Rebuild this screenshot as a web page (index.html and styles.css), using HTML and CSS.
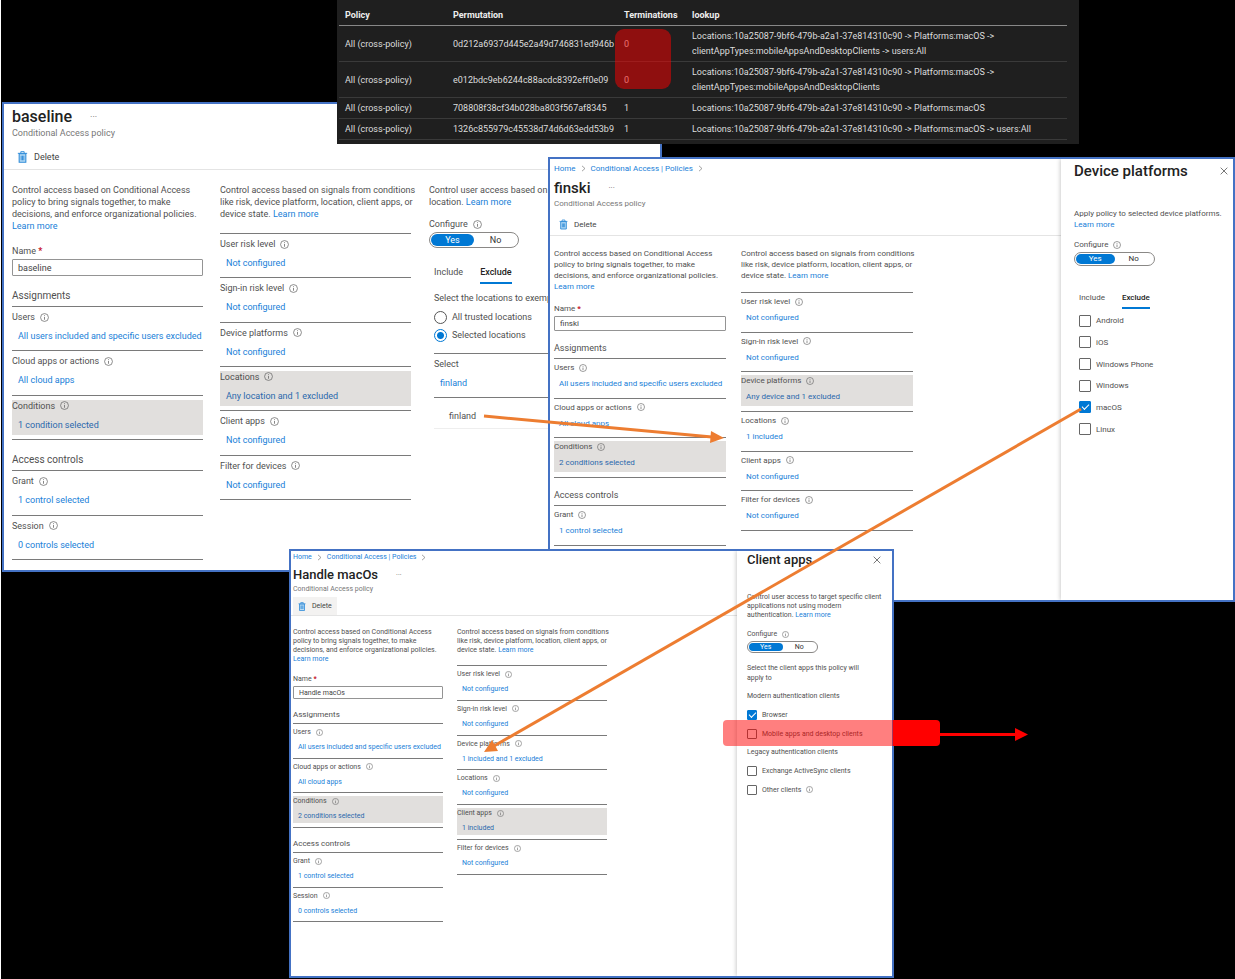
FILE: index.html
```html
<!DOCTYPE html>
<html lang="en">
<head>
<meta charset="utf-8">
<title>Conditional Access policies</title>
<link rel="stylesheet" href="styles.css">
</head>
<body>
<svg class="defs" aria-hidden="true">
  <symbol id="info" viewBox="0 0 16 16"><circle cx="8" cy="8" r="7" fill="none" stroke="currentColor" stroke-width="1.3"/><path d="M8 7v5M8 4v1.500" stroke="currentColor" stroke-width="1.4"/></symbol>
  <symbol id="trash" viewBox="0 0 16 18"><path d="M3 4h10v13H3z" fill="#b9dcf5" stroke="#2e8bd8" stroke-width="1.6"/><path d="M1 3.500h14M5.500 3V1h5v2M6 7v7M8 7v7M10 7v7" fill="none" stroke="#2e8bd8" stroke-width="1.4"/></symbol>
  <symbol id="close" viewBox="0 0 12 12"><path d="M1 1l10 10M11 1L1 11" fill="none" stroke="currentColor" stroke-width="1.1"/></symbol>
  <symbol id="chev" viewBox="0 0 8 12"><path d="M1.500 1.500L6.500 6l-5 4.500" fill="none" stroke="currentColor" stroke-width="1.2"/></symbol>
</svg>
<main class="canvas">

  <section class="window win-baseline">
    <header class="head">
      <div class="title-row"><h1>baseline</h1><button class="more" aria-label="More">···</button></div>
      <p class="sub">Conditional Access policy</p>
    </header>
    <div class="toolbar"><button class="delete"><svg><use href="#trash"/></svg>Delete</button></div>
    <div class="columns">
      <div class="col">
        <p class="desc">Control access based on Conditional Access<br>policy to bring signals together, to make<br>decisions, and enforce organizational policies.<br><a href="#">Learn more</a></p>
        <label class="name" for="n1">Name <b>*</b></label>
        <input class="field" id="n1" type="text" value="baseline">
        <h2>Assignments</h2>
        <ul class="list rows3">
          <li><div><span>Users <svg><use href="#info"/></svg></span><a href="#">All users included and specific users excluded</a></div></li>
          <li><div><span>Cloud apps or actions <svg><use href="#info"/></svg></span><a href="#">All cloud apps</a></div></li>
          <li class="on"><div><span>Conditions <svg><use href="#info"/></svg></span><a href="#">1 condition selected</a></div></li>
        </ul>
        <h2>Access controls</h2>
        <ul class="list rows2">
          <li><div><span>Grant <svg><use href="#info"/></svg></span><a href="#">1 control selected</a></div></li>
          <li><div><span>Session <svg><use href="#info"/></svg></span><a href="#">0 controls selected</a></div></li>
        </ul>
      </div>
      <div class="col">
        <p class="desc">Control access based on signals from conditions<br>like risk, device platform, location, client apps, or<br>device state. <a href="#">Learn more</a></p>
        <ul class="list rows6">
          <li><div><span>User risk level <svg><use href="#info"/></svg></span><a href="#">Not configured</a></div></li>
          <li><div><span>Sign-in risk level <svg><use href="#info"/></svg></span><a href="#">Not configured</a></div></li>
          <li><div><span>Device platforms <svg><use href="#info"/></svg></span><a href="#">Not configured</a></div></li>
          <li class="on"><div><span>Locations <svg><use href="#info"/></svg></span><a href="#">Any location and 1 excluded</a></div></li>
          <li><div><span>Client apps <svg><use href="#info"/></svg></span><a href="#">Not configured</a></div></li>
          <li><div><span>Filter for devices <svg><use href="#info"/></svg></span><a href="#">Not configured</a></div></li>
        </ul>
      </div>
      <div class="col clipped">
        <p class="desc">Control user access based on t<br>location. <a href="#">Learn more</a></p>
        <p class="configure">Configure <svg><use href="#info"/></svg></p>
        <div class="toggle"><button aria-pressed="true">Yes</button><button aria-pressed="false">No</button></div>
        <div class="inset">
          <div class="tabs"><button>Include</button><button class="current">Exclude</button></div>
          <p class="prompt">Select the locations to exemp</p>
          <label class="radio"><input type="radio" name="loc">All trusted locations</label>
          <label class="radio"><input type="radio" name="loc" checked>Selected locations</label>
          <ul class="list rows1"><li><div><span>Select</span><a href="#">finland</a></div></li></ul>
          <p class="picked">finland</p>
        </div>
      </div>
    </div>
  </section>

  <section class="window win-finski">
    <div class="main">
      <header class="head">
        <nav class="crumbs"><a href="#">Home</a><svg><use href="#chev"/></svg><a href="#">Conditional Access | Policies</a><svg><use href="#chev"/></svg></nav>
        <div class="title-row"><h1>finski</h1><button class="more" aria-label="More">···</button></div>
        <p class="sub">Conditional Access policy</p>
      </header>
      <div class="toolbar"><button class="delete"><svg><use href="#trash"/></svg>Delete</button></div>
      <div class="columns">
        <div class="col">
          <p class="desc">Control access based on Conditional Access<br>policy to bring signals together, to make<br>decisions, and enforce organizational policies.<br><a href="#">Learn more</a></p>
          <label class="name" for="n2">Name <b>*</b></label>
          <input class="field" id="n2" type="text" value="finski">
          <h2>Assignments</h2>
          <ul class="list rows3">
            <li><div><span>Users <svg><use href="#info"/></svg></span><a href="#">All users included and specific users excluded</a></div></li>
            <li><div><span>Cloud apps or actions <svg><use href="#info"/></svg></span><a href="#">All cloud apps</a></div></li>
            <li class="on"><div><span>Conditions <svg><use href="#info"/></svg></span><a href="#">2 conditions selected</a></div></li>
          </ul>
          <h2>Access controls</h2>
          <ul class="list rows1">
            <li><div><span>Grant <svg><use href="#info"/></svg></span><a href="#">1 control selected</a></div></li>
          </ul>
        </div>
        <div class="col">
          <p class="desc">Control access based on signals from conditions<br>like risk, device platform, location, client apps, or<br>device state. <a href="#">Learn more</a></p>
          <ul class="list rows6">
            <li><div><span>User risk level <svg><use href="#info"/></svg></span><a href="#">Not configured</a></div></li>
            <li><div><span>Sign-in risk level <svg><use href="#info"/></svg></span><a href="#">Not configured</a></div></li>
            <li class="on"><div><span>Device platforms <svg><use href="#info"/></svg></span><a href="#">Any device and 1 excluded</a></div></li>
            <li><div><span>Locations <svg><use href="#info"/></svg></span><a href="#">1 included</a></div></li>
            <li><div><span>Client apps <svg><use href="#info"/></svg></span><a href="#">Not configured</a></div></li>
            <li><div><span>Filter for devices <svg><use href="#info"/></svg></span><a href="#">Not configured</a></div></li>
          </ul>
        </div>
      </div>
    </div>
    <aside class="panel">
      <div class="panel-head"><h1>Device platforms</h1><button aria-label="Close"><svg><use href="#close"/></svg></button></div>
      <p class="desc">Apply policy to selected device platforms.<br><a href="#">Learn more</a></p>
      <p class="configure">Configure <svg><use href="#info"/></svg></p>
      <div class="toggle"><button aria-pressed="true">Yes</button><button aria-pressed="false">No</button></div>
      <div class="inset">
        <div class="tabs"><button>Include</button><button class="current">Exclude</button></div>
        <div class="checks">
          <label><input type="checkbox">Android</label>
          <label><input type="checkbox">iOS</label>
          <label><input type="checkbox">Windows Phone</label>
          <label><input type="checkbox">Windows</label>
          <label><input type="checkbox" checked>macOS</label>
          <label><input type="checkbox">Linux</label>
        </div>
      </div>
    </aside>
  </section>

  <section class="window win-macos">
    <div class="main">
      <header class="head">
        <nav class="crumbs"><a href="#">Home</a><svg><use href="#chev"/></svg><a href="#">Conditional Access | Policies</a><svg><use href="#chev"/></svg></nav>
        <div class="title-row"><h1>Handle macOs</h1><button class="more" aria-label="More">···</button></div>
        <p class="sub">Conditional Access policy</p>
      </header>
      <div class="toolbar"><button class="delete hover"><svg><use href="#trash"/></svg>Delete</button></div>
      <div class="columns">
        <div class="col">
          <p class="desc">Control access based on Conditional Access<br>policy to bring signals together, to make<br>decisions, and enforce organizational policies.<br><a href="#">Learn more</a></p>
          <label class="name" for="n3">Name <b>*</b></label>
          <input class="field" id="n3" type="text" value="Handle macOs">
          <h2>Assignments</h2>
          <ul class="list rows3">
            <li><div><span>Users <svg><use href="#info"/></svg></span><a href="#">All users included and specific users excluded</a></div></li>
            <li><div><span>Cloud apps or actions <svg><use href="#info"/></svg></span><a href="#">All cloud apps</a></div></li>
            <li class="on"><div><span>Conditions <svg><use href="#info"/></svg></span><a href="#">2 conditions selected</a></div></li>
          </ul>
          <h2>Access controls</h2>
          <ul class="list rows2">
            <li><div><span>Grant <svg><use href="#info"/></svg></span><a href="#">1 control selected</a></div></li>
            <li><div><span>Session <svg><use href="#info"/></svg></span><a href="#">0 controls selected</a></div></li>
          </ul>
        </div>
        <div class="col">
          <p class="desc">Control access based on signals from conditions<br>like risk, device platform, location, client apps, or<br>device state. <a href="#">Learn more</a></p>
          <ul class="list rows6">
            <li><div><span>User risk level <svg><use href="#info"/></svg></span><a href="#">Not configured</a></div></li>
            <li><div><span>Sign-in risk level <svg><use href="#info"/></svg></span><a href="#">Not configured</a></div></li>
            <li><div><span>Device platforms <svg><use href="#info"/></svg></span><a href="#">1 included and 1 excluded</a></div></li>
            <li><div><span>Locations <svg><use href="#info"/></svg></span><a href="#">Not configured</a></div></li>
            <li class="on"><div><span>Client apps <svg><use href="#info"/></svg></span><a href="#">1 included</a></div></li>
            <li><div><span>Filter for devices <svg><use href="#info"/></svg></span><a href="#">Not configured</a></div></li>
          </ul>
        </div>
      </div>
    </div>
    <aside class="panel">
      <div class="panel-head"><h1>Client apps</h1><button aria-label="Close"><svg><use href="#close"/></svg></button></div>
      <p class="desc">Control user access to target specific client<br>applications not using modern<br>authentication. <a href="#">Learn more</a></p>
      <p class="configure">Configure <svg><use href="#info"/></svg></p>
      <div class="toggle"><button aria-pressed="true">Yes</button><button aria-pressed="false">No</button></div>
      <p class="prompt">Select the client apps this policy will<br>apply to</p>
      <div class="checks">
        <p>Modern authentication clients</p>
        <label><input type="checkbox" checked>Browser</label>
        <label><input type="checkbox">Mobile apps and desktop clients</label>
        <p>Legacy authentication clients</p>
        <label><input type="checkbox">Exchange ActiveSync clients</label>
        <label><input type="checkbox">Other clients <svg><use href="#info"/></svg></label>
      </div>
    </aside>
  </section>

  <section class="results">
    <table>
      <thead><tr><th class="c-policy">Policy</th><th class="c-perm">Permutation</th><th class="c-term">Terminations</th><th>lookup</th></tr></thead>
      <tbody>
        <tr><td>All (cross-policy)</td><td>0d212a6937d445e2a49d746831ed946b</td><td>0</td><td>Locations:10a25087-9bf6-479b-a2a1-37e814310c90 -&gt; Platforms:macOS -&gt;<br>clientAppTypes:mobileAppsAndDesktopClients -&gt; users:All</td></tr>
        <tr><td>All (cross-policy)</td><td>e012bdc9eb6244c88acdc8392eff0e09</td><td>0</td><td>Locations:10a25087-9bf6-479b-a2a1-37e814310c90 -&gt; Platforms:macOS -&gt;<br>clientAppTypes:mobileAppsAndDesktopClients</td></tr>
        <tr><td>All (cross-policy)</td><td>708808f38cf34b028ba803f567af8345</td><td>1</td><td>Locations:10a25087-9bf6-479b-a2a1-37e814310c90 -&gt; Platforms:macOS</td></tr>
        <tr><td>All (cross-policy)</td><td>1326c855979c45538d74d6d63edd53b9</td><td>1</td><td>Locations:10a25087-9bf6-479b-a2a1-37e814310c90 -&gt; Platforms:macOS -&gt; users:All</td></tr>
      </tbody>
    </table>
  </section>

  <div class="mark mark-zero"></div>
  <div class="mark mark-client"></div>
  <svg class="arrows" width="1235" height="979" viewBox="0 0 1235 979" aria-hidden="true">
    <g stroke="#ed7d31" stroke-width="3" fill="#ed7d31">
      <path d="M484 416L712 437"/><path stroke="none" d="M711 431l13 7-14 5z"/>
      <path d="M1081 409L494 746"/><path stroke="none" d="M484 752l8-12 6 11z"/>
    </g>
    <path d="M940 734.500H1016" stroke="#f00" stroke-width="3"/><path fill="#f00" d="M1015 728l13 6.500-13 6.500z"/>
  </svg>
</main>
</body>
</html>
```
FILE: styles.css
```css
* { box-sizing: border-box; }
body { margin: 0; background: #000; font-family: Roboto, "Open Sans", sans-serif; }
h1, h2, p, ul { margin: 0; padding: 0; }
ul { list-style: none; }
button { padding: 0; border: 0; background: none; color: inherit; font: inherit; }
input { margin: 0; }
a { color: #2080d8; text-decoration: none; }
.defs { position: absolute; width: 0; height: 0; }

.canvas { position: relative; min-height: 979px; overflow: hidden; border-left: 1px solid #fff; background: #000; }

/* Windows placed freely on the canvas */
.window {
  position: absolute;
  display: flex;
  overflow: hidden;
  border: 2px solid #4472c4;
  background: #fff;
  color: #505050;
  font-size: var(--text);
  line-height: var(--line);
  white-space: nowrap;
}
.win-baseline {
  --text: 9px; --line: 12px; --desc-line: 12px; --title: 16px; --title-line: 18px; --icon: 9px;
  --head-line: 14px; --section: 10px; --above: 13px; --below: 3px; --gap: 17px; --col: 191px;
  --pad: 8px; --bar: 24px; --bar-above: 6px; --body: 14px; --field: 17px; --row-gap: 7px; --row-end: 4px; --row-pad: 4px; --indent: 6px;
  --toggle-w: 90px; --toggle-h: 16px; --l1: 45px; --l2: 90px; --l3: 134px; --l6: 267px;
  left: 1px; top: 102px; width: 660px; height: 470px; flex-direction: column;
}
.win-finski {
  --text: 8px; --line: 11px; --desc-line: 11px; --title: 15px; --title-line: 18px; --icon: 8px;
  --head-line: 12px; --section: 9px; --above: 11px; --below: 4px; --gap: 15px; --col: 172px;
  --pad: 4px; --bar: 22px; --bar-above: 4px; --body: 12px; --field: 15px; --row-gap: 5px; --row-end: 4px; --row-pad: 3px; --indent: 5px;
  --toggle-w: 81px; --toggle-h: 14px; --l1: 41px; --l3: 120px; --l6: 239px;
  left: 547px; top: 157px; width: 687px; height: 445px;
}
.win-macos {
  --text: 7px; --line: 10px; --desc-line: 9px; --title: 13px; --title-line: 16px; --icon: 7px;
  --head-line: 11px; --section: 8px; --above: 10px; --below: 3px; --gap: 14px; --col: 150px;
  --pad: 2px; --bar: 18px; --bar-above: 3px; --body: 12px; --field: 13px; --row-gap: 5px; --row-end: 2px; --row-pad: 3px; --indent: 5px;
  --toggle-w: 71px; --toggle-h: 12px; --l2: 70px; --l3: 105px; --l6: 210px;
  left: 288px; top: 549px; width: 605px; height: 429px;
}
.main { flex: 1; min-width: 0; }

.head { padding: 4px var(--pad) 0; }
.win-macos .head { padding-top: 1px; }
.crumbs { display: flex; align-items: center; gap: 5px; margin-bottom: 5px; }
.crumbs svg { width: 5px; height: 7px; color: #777; }
.title-row { display: flex; align-items: center; gap: 18px; }
h1 { color: #222; font-size: var(--title); line-height: var(--title-line); font-weight: 500; }
.more { color: #666; line-height: 10px; }
.sub { margin-top: 1px; color: #777; }

.toolbar { height: calc(var(--bar) + var(--bar-above) + 1px); padding-top: var(--bar-above); padding-left: var(--pad); border-bottom: 1px solid #e4e4e4; }
.delete { display: flex; align-items: center; gap: 6px; height: var(--bar); padding: 0 5px; color: #444; }
.delete svg { width: 11px; height: 12px; }
.win-finski .delete svg { width: 9px; height: 11px; }
.win-macos .delete svg { width: 8px; height: 9px; }
.delete.hover { background: #f3f2f1; }

.columns { display: flex; gap: var(--gap); padding: var(--body) 0 0 var(--pad); }
.col { flex: none; width: var(--col); }
.col.clipped { width: 120px; padding-left: 1px; overflow: hidden; }
.desc { line-height: var(--desc-line); }
.name { display: block; margin-top: var(--above); }
.name b { color: #c50f1f; }
.field { display: block; width: 100%; height: var(--field); margin-top: 2px; padding: 0 5px; border: 1px solid #949494; border-radius: 1px; color: #444; font: inherit; }
h2 { margin-top: var(--above); padding-bottom: var(--below); font-size: var(--section); line-height: var(--head-line); font-weight: 400; }

.list { display: grid; grid-auto-rows: 1fr; border-top: 1px solid #7a7a7a; }
.desc + .list { margin-top: var(--above); }
.rows1 { height: var(--l1); }
.rows2 { height: var(--l2); }
.rows3 { height: var(--l3); }
.rows6 { height: var(--l6); }
.list li { padding: var(--row-pad) 0 3px; border-bottom: 1px solid #7a7a7a; }
.list li > div { display: flex; flex-direction: column; gap: var(--row-gap); padding-bottom: var(--row-end); }
.list .on > div { background: #e1dfdd; }
.list .on a { color: #2a68ac; }
.list span { display: flex; align-items: center; gap: 5px; }
.list a { padding-left: var(--indent); }
.list svg, .configure svg, .checks svg { width: var(--icon); height: var(--icon); color: #666; }

.configure { display: flex; align-items: center; gap: 5px; margin-top: 9px; }
.clipped .configure { margin-top: 10px; }
.toggle { display: flex; width: var(--toggle-w); height: var(--toggle-h); margin-top: 2px; padding: 1px; border: 1px solid #8a8886; border-radius: 8px; }
.toggle button { flex: 1; border-radius: 7px; line-height: 1; color: #333; }
.toggle [aria-pressed="true"] { background: #0078d4; color: #fff; }
.inset { padding-left: 5px; }
.tabs { display: flex; gap: 17px; margin-top: 18px; }
.tabs button { padding-bottom: 4px; border-bottom: 2px solid transparent; }
.tabs .current { border-color: #0078d4; color: #222; font-weight: 500; }
.tabs + .prompt { margin: 8px 0 4px; }
.radio { display: flex; align-items: center; gap: 5px; height: 18px; }
.radio input { appearance: none; width: 13px; height: 13px; border: 1px solid #555; border-radius: 50%; }
.radio input:checked { border-color: #0078d4; background: radial-gradient(#0078d4 3px, #fff 4px); }
.radio + .list { margin-top: 9px; }
.picked { padding: 12px 15px 6px; border-bottom: 1px solid #eee; }

/* Side panels */
.panel { flex: none; width: 172px; padding: 2px 5px 0 13px; box-shadow: -1px 0 4px rgba(0, 0, 0, .2); }
.panel-head { display: flex; justify-content: space-between; align-items: center; height: 20px; }
.panel-head svg { display: block; width: 8px; height: 8px; color: #444; }
.panel .desc { margin-top: 27px; }
.panel .tabs { margin-top: 26px; gap: 17px; }
.checks { display: grid; grid-auto-rows: 1fr; height: 130px; margin-top: 1px; }
.checks label { display: flex; align-items: center; gap: 5px; }
.checks input { appearance: none; display: grid; place-items: center; width: 12px; height: 12px; border: 1px solid #666; border-radius: 1px; }
.checks input:checked { border-color: #0078d4; background: #0078d4; }
.checks input:checked::after { content: ""; width: 6px; height: 3px; margin-bottom: 2px; border: solid #fff; border-width: 0 0 1px 1px; transform: rotate(-45deg); }
.win-macos .panel { width: 155px; padding: 1px 11px 0 10px; }
.win-macos .panel-head { height: 16px; }
.win-macos .panel .desc { margin-top: 25px; }
.win-macos .panel .prompt { margin-top: 10px; }
.win-macos .checks { height: 112px; margin-top: 4px; }
.win-macos .checks p { align-self: center; }
.win-macos .checks input { width: 10px; height: 10px; }

/* Results table */
.results { position: absolute; left: 336px; top: 0; width: 742px; height: 144px; padding: 0 12px 0 2px; overflow: hidden; background: #1f1f1f; color: #ddd; font-size: 9px; line-height: 15px; }
table { width: 100%; border-collapse: collapse; table-layout: fixed; }
th, td { padding: 3px 0 2px 6px; text-align: left; border-bottom: 1px solid #3a3a3a; white-space: nowrap; }
th { padding-top: 8px; border-color: #888; color: #eee; font-weight: 700; }
.c-policy { width: 108px; }
.c-perm { width: 171px; }
.c-term { width: 68px; }

/* Annotations over the windows */
.mark { position: absolute; }
.mark-zero { left: 614px; top: 29px; width: 56px; height: 60px; border-radius: 9px; background: rgba(255, 0, 0, .5); }
.mark-client { left: 722px; top: 720px; width: 217px; height: 26px; border-radius: 4px; background: linear-gradient(to right, rgba(255, 0, 0, .5) 170px, #f00 170px); }
.arrows { position: absolute; left: -1px; top: 0; }
```
